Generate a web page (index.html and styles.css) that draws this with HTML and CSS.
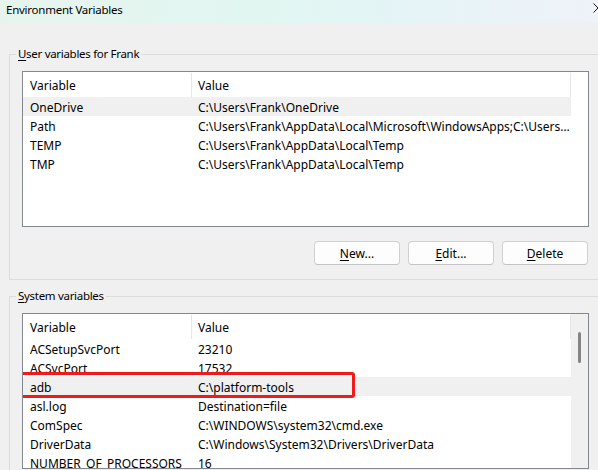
FILE: index.html
```html
<!DOCTYPE html>
<html>
<head>
<meta charset="utf-8">
<title>Environment Variables</title>
<link rel="stylesheet" href="styles.css">
</head>
<body>
<div class="window">
  <div class="titlebar">
    <span class="title">Environment Variables</span>
    <svg class="close" width="5" height="10" viewBox="0 0 5 10"><path d="M0.5 0.5 L5 5 L0.5 9.5" stroke="#1a1a1a" stroke-width="1" fill="none"/></svg>
  </div>
  <div class="content">
    <fieldset class="group">
      <legend><u>U</u>ser variables for Frank</legend>
      <div class="list">
        <div class="list-main">
          <div class="list-head">
            <div class="hcell c-var">Variable</div>
            <div class="hcell c-val">Value</div>
          </div>
          <div class="row selected"><span class="cell c-var">OneDrive</span><span class="cell c-val">C:\Users\Frank\OneDrive</span></div>
          <div class="row"><span class="cell c-var">Path</span><span class="cell c-val">C:\Users\Frank\AppData\Local\Microsoft\WindowsApps;C:\Users\Frank\AppData\Local</span></div>
          <div class="row"><span class="cell c-var">TEMP</span><span class="cell c-val">C:\Users\Frank\AppData\Local\Temp</span></div>
          <div class="row"><span class="cell c-var">TMP</span><span class="cell c-val">C:\Users\Frank\AppData\Local\Temp</span></div>
        </div>
        <div class="side"></div>
      </div>
      <div class="buttons">
        <button class="btn"><u>N</u>ew...</button>
        <button class="btn"><u>E</u>dit...</button>
        <button class="btn"><u>D</u>elete</button>
      </div>
    </fieldset>
    <fieldset class="group group-system">
      <legend><u>S</u>ystem variables</legend>
      <div class="list">
        <div class="list-main">
          <div class="list-head">
            <div class="hcell c-var">Variable</div>
            <div class="hcell c-val">Value</div>
          </div>
          <div class="row"><span class="cell c-var">ACSetupSvcPort</span><span class="cell c-val">23210</span></div>
          <div class="row"><span class="cell c-var">ACSvcPort</span><span class="cell c-val">17532</span></div>
          <div class="row selected marked"><span class="cell c-var">adb</span><span class="cell c-val">C:\platform-tools</span><span class="highlight"></span></div>
          <div class="row"><span class="cell c-var">asl.log</span><span class="cell c-val">Destination=file</span></div>
          <div class="row"><span class="cell c-var">ComSpec</span><span class="cell c-val">C:\WINDOWS\system32\cmd.exe</span></div>
          <div class="row"><span class="cell c-var">DriverData</span><span class="cell c-val">C:\Windows\System32\Drivers\DriverData</span></div>
          <div class="row"><span class="cell c-var">NUMBER_OF_PROCESSORS</span><span class="cell c-val">16</span></div>
        </div>
        <div class="side scrollbar"><div class="thumb"></div></div>
      </div>
    </fieldset>
  </div>
</div>
</body>
</html>
```

FILE: styles.css
```css
html, body {
  margin: 0;
  padding: 0;
}
body {
  width: 598px;
  height: 470px;
  overflow: hidden;
  background: #f0f0f0;
  font-family: "Noto Sans", "Open Sans", sans-serif;
  font-size: 12px;
  color: #000;
}
.window {
  width: 598px;
  height: 470px;
  overflow: hidden;
}
.titlebar {
  height: 23px;
  box-sizing: border-box;
  display: flex;
  align-items: flex-start;
  justify-content: space-between;
  padding-left: 6px;
  background: linear-gradient(90deg, #e7f4ee 0%, #e1f6f1 45%, #e4f4f6 65%, #eef2f9 100%);
}
.title {
  line-height: 16px;
  padding-top: 2px;
  font-size: 11.5px;
  letter-spacing: -0.25px;
}
.close {
  display: block;
  margin-top: 3px;
  flex: none;
}
.content {
  padding-top: 23px;
}
.group {
  margin: 0 0 0 9px;
  padding: 9px 0 14px 12px;
  border: 1px solid #dcdcdc;
  border-right: none;
  min-width: 0;
}
.group-system {
  margin-top: 8px;
  padding-bottom: 2px;
  border-bottom: none;
}
legend {
  margin-left: -6px;
  padding: 0 2px;
  line-height: 16px;
  font-size: 11.5px;
  letter-spacing: -0.3px;
}
u {
  text-decoration: underline;
  text-underline-offset: 2px;
}
.list {
  width: 567px;
  height: 156px;
  box-sizing: border-box;
  border: 1px solid #828790;
  background: #fff;
  display: flex;
  overflow: hidden;
}
.list-main {
  flex: 1;
  min-width: 0;
  display: flex;
  flex-direction: column;
}
.side {
  width: 17px;
  flex: none;
  background: #fff;
}
.scrollbar {
  background: #f0f0f0;
  display: flex;
  justify-content: center;
  padding-top: 18px;
  box-sizing: border-box;
}
.thumb {
  width: 3px;
  height: 31px;
  border-radius: 2px;
  background: #858585;
}
.list-head {
  height: 25px;
  flex: none;
  display: flex;
  align-items: stretch;
}
.hcell {
  display: flex;
  align-items: center;
  box-sizing: border-box;
  position: relative;
  padding-top: 1px;
}
.hcell::after {
  content: "";
  position: absolute;
  right: 0;
  top: 1px;
  bottom: 0;
  width: 1px;
  background: #e5e5e5;
}
.c-var {
  width: 169px;
  padding-left: 7px;
  box-sizing: border-box;
  flex: none;
}
.c-val {
  flex: 1;
  padding-left: 6px;
  min-width: 0;
}
.row {
  height: 19px;
  flex: none;
  display: flex;
  align-items: flex-start;
  white-space: nowrap;
}
.cell {
  overflow: hidden;
  text-overflow: ellipsis;
  white-space: nowrap;
  line-height: 17px;
  padding-top: 2px;
}
.row.selected {
  background: #f0f0f0;
}
.marked {
  position: relative;
}
.highlight {
  position: absolute;
  left: -4px;
  top: -5px;
  width: 336px;
  height: 26px;
  box-sizing: border-box;
  border: 3px solid #f3191b;
  border-radius: 3px;
}
.buttons {
  display: flex;
  justify-content: flex-end;
  gap: 8px;
  width: 566px;
  margin-top: 14px;
}
.btn {
  width: 86px;
  height: 24px;
  box-sizing: border-box;
  border: 1px solid #d0d0d0;
  border-bottom-color: #c4c4c4;
  border-radius: 4px;
  background: #fdfdfd;
  font-family: inherit;
  font-size: 12px;
  color: #000;
  padding: 0;
}
```
